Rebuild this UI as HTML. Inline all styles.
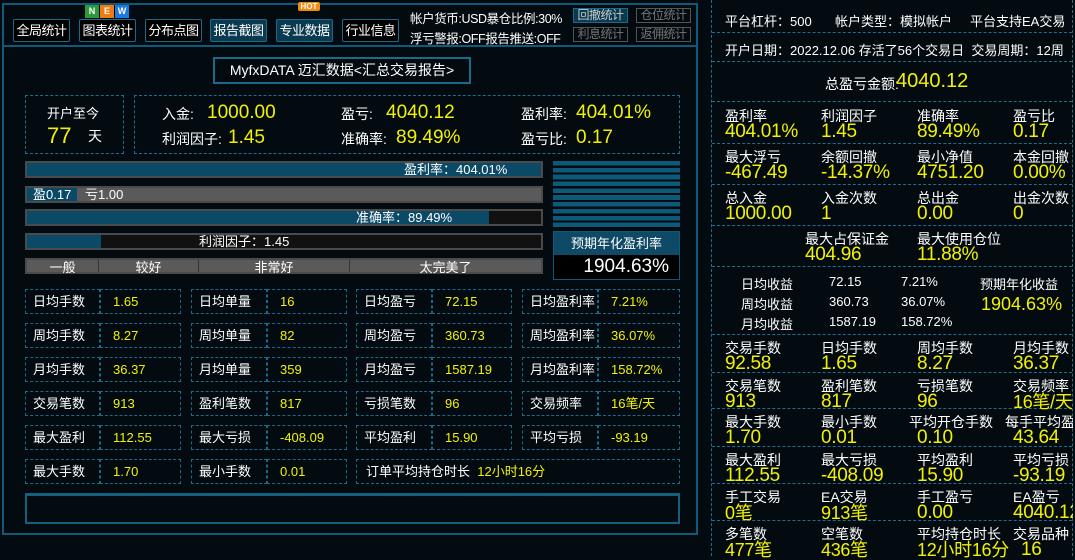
<!DOCTYPE html><html><head><meta charset="utf-8"><style>
*{margin:0;padding:0;box-sizing:border-box}
body{width:1075px;height:556px;background:#030b10;position:relative;overflow:hidden;font-family:"Liberation Sans","Noto Sans CJK SC",sans-serif;color:#fff;font-size:14px}
.a{position:absolute;white-space:nowrap}
.y{color:#f2f200}
.btn{position:absolute;top:19px;height:23px;width:57px;border:1px solid #1b6a8a;background:#000;font-size:13px;line-height:21px;text-align:center;border-radius:2px;white-space:nowrap;overflow:hidden;letter-spacing:-0.5px}
.btn.f{background:#0a3a50}
.sb{position:absolute;height:15px;width:55px;border:1px solid #555;font-size:12px;line-height:13px;text-align:center;color:#777;white-space:nowrap;overflow:hidden;letter-spacing:-0.5px}
.dash{position:absolute;border:1px dashed #1a7090}
.bar{position:absolute;left:25px;width:518px;height:17px;border:2px solid #4a4a4a;background:#111}
.bar i{position:absolute;left:0;top:0;bottom:0;background:#0a4a66}
.bar span{position:absolute;top:-1px;font-size:13px;line-height:15px;white-space:nowrap}
.cell{position:absolute;height:25px;border:1px dashed #1a6a8a;font-size:13px;line-height:23px;white-space:nowrap}
.rl{position:absolute;left:0;right:0;border-top:1px dashed #1a7090}
.l{font-size:14px;line-height:15px}
.v{font-size:19px;line-height:20px;color:#f2f200;letter-spacing:-0.3px}
.tt{font-size:12.5px;letter-spacing:-0.4px}
</style></head><body>
<div class="a" style="left:2px;top:3px;width:696px;height:532px;border:2px solid #0e5a7a"></div>
<div class="a" style="left:2px;top:45px;width:696px;border-top:2px solid #0e5a7a"></div>
<div class="btn" style="left:13px">全局统计</div>
<div class="btn" style="left:79px">图表统计</div>
<div class="btn" style="left:145px">分布点图</div>
<div class="btn f" style="left:210px">报告截图</div>
<div class="btn f" style="left:276px">专业数据</div>
<div class="btn" style="left:342px">行业信息</div>
<div class="a" style="left:85px;top:5px;width:14px;height:13px;background:#2a9a3a;font-size:9px;text-align:center;line-height:13px;font-weight:bold">N</div>
<div class="a" style="left:100px;top:5px;width:14px;height:13px;background:#f07a10;font-size:9px;text-align:center;line-height:13px;font-weight:bold">E</div>
<div class="a" style="left:115px;top:5px;width:14px;height:13px;background:#1a7ae0;font-size:9px;text-align:center;line-height:13px;font-weight:bold">W</div>
<div class="a" style="left:298px;top:2px;width:22px;height:9px;background:#f08a10;font-size:8px;text-align:center;line-height:9px;font-weight:bold;border-radius:2px">HOT</div>
<div class="a tt" style="left:410px;top:8px">帐户货币:USD暴仓比例:30%</div>
<div class="a tt" style="left:410px;top:28px">浮亏警报:OFF报告推送:OFF</div>
<div class="sb" style="left:573px;top:8px;border-color:#1b6a8a;background:#0a3a50;color:#ccc">回撤统计</div>
<div class="sb" style="left:636px;top:8px">仓位统计</div>
<div class="sb" style="left:573px;top:27px">利息统计</div>
<div class="sb" style="left:636px;top:27px">返佣统计</div>

<div class="a" style="left:213px;top:57px;width:258px;height:27px;border:2px solid #1a6a8a;font-size:14px;line-height:23px;text-align:center">MyfxDATA 迈汇数据&lt;汇总交易报告&gt;</div>
<div class="dash" style="left:25px;top:95px;width:99px;height:59px"></div>
<div class="a" style="left:47px;top:103px;font-size:13px">开户至今</div>
<div class="a y" style="left:47px;top:123px;font-size:22px">77</div>
<div class="a" style="left:88px;top:126px;font-size:14px">天</div>
<div class="dash" style="left:134px;top:95px;width:546px;height:59px"></div>
<div class="a" style="left:162px;top:104px">入金:</div><div class="a y" style="left:207px;top:102px;font-size:19px">1000.00</div>
<div class="a" style="left:341px;top:104px">盈亏:</div><div class="a y" style="left:386px;top:102px;font-size:19px">4040.12</div>
<div class="a" style="left:521px;top:104px">盈利率:</div><div class="a y" style="left:576px;top:102px;font-size:19px">404.01%</div>
<div class="a" style="left:162px;top:129px">利润因子:</div><div class="a y" style="left:228px;top:127px;font-size:19px">1.45</div>
<div class="a" style="left:341px;top:129px">准确率:</div><div class="a y" style="left:396px;top:127px;font-size:19px">89.49%</div>
<div class="a" style="left:521px;top:129px">盈亏比:</div><div class="a y" style="left:576px;top:127px;font-size:19px">0.17</div>

<div class="bar" style="top:161px"><i style="right:0"></i><span style="left:377px">盈利率：404.01%</span></div>
<div class="bar" style="top:186px;background:#5a5a5a"><i style="width:50px"></i><span style="left:6px">盈0.17</span><span style="left:58px">亏1.00</span></div>
<div class="bar" style="top:209px"><i style="width:462px"></i><span style="left:329px">准确率：89.49%</span></div>
<div class="bar" style="top:233px"><i style="width:74px"></i><span style="left:172px">利润因子：1.45</span></div>
<div class="bar" style="top:258px;height:16px;background:#5a5a5a;font-size:13px;line-height:12px">
<span style="left:0;width:72px;text-align:center;border-right:1px solid #333;height:12px;top:0">一般</span>
<span style="left:72px;width:100px;text-align:center;border-right:1px solid #333;height:12px;top:0">较好</span>
<span style="left:172px;width:151px;text-align:center;border-right:1px solid #333;height:12px;top:0">非常好</span>
<span style="left:323px;width:191px;text-align:center;top:0">太完美了</span></div>
<div class="a" style="left:553px;top:161px;width:127px;height:68px;background:repeating-linear-gradient(#0e5878 0 4.6px,transparent 4.6px 6.85px)"></div>
<div class="a" style="left:553px;top:231px;width:127px;height:49px;border:1px solid #0e5878;background:#000">
<div style="background:#0e4a66;height:23px;text-align:center;line-height:23px;font-size:13px">预期年化盈利率</div>
<div style="text-align:right;padding-right:10px;font-size:19px;line-height:24px">1904.63%</div></div>

<div id="cells"></div>
<div class="a" style="left:25px;top:493px;width:655px;height:31px;border:2px solid #14607e;border-top-width:3px"></div>

<div class="a" style="left:711px;top:0;width:362px;height:556px;border-left:1px dashed #1a7090;border-right:1px dashed #1a7090">
<div class="rl" style="top:32px"></div><div class="rl" style="top:61px"></div><div class="rl" style="top:101px"></div><div class="rl" style="top:143px"></div><div class="rl" style="top:184px"></div><div class="rl" style="top:225px"></div><div class="rl" style="top:266px"></div><div class="rl" style="top:334px"></div><div class="rl" style="top:372px"></div><div class="rl" style="top:408px"></div><div class="rl" style="top:446px"></div><div class="rl" style="top:483px"></div><div class="rl" style="top:520px"></div>
</div>
<div class="a" style="left:725px;top:11px;font-size:13px">平台杠杆：500</div>
<div class="a" style="left:835px;top:11px;font-size:13px">帐户类型：模拟帐户</div>
<div class="a" style="left:970px;top:11px;font-size:13px">平台支持EA交易</div>
<div class="a" style="left:725px;top:40px;font-size:13px">开户日期：2022.12.06 存活了56个交易日&nbsp; 交易周期：12周</div>
<div class="a" style="left:825px;top:74px;font-size:14px">总盈亏金额:</div><div class="a y" style="left:896px;top:70px;font-size:20px">4040.12</div>
<div class="a" style="left:741px;top:274px;font-size:13px">日均收益</div><div class="a" style="left:829px;top:274px;font-size:13px">72.15</div><div class="a" style="left:901px;top:274px;font-size:13px">7.21%</div>
<div class="a" style="left:741px;top:294px;font-size:13px">周均收益</div><div class="a" style="left:829px;top:294px;font-size:13px">360.73</div><div class="a" style="left:901px;top:294px;font-size:13px">36.07%</div>
<div class="a" style="left:741px;top:314px;font-size:13px">月均收益</div><div class="a" style="left:829px;top:314px;font-size:13px">1587.19</div><div class="a" style="left:901px;top:314px;font-size:13px">158.72%</div>
<div class="a" style="left:980px;top:274px;font-size:13px">预期年化收益</div><div class="a y" style="left:981px;top:294px;font-size:18px">1904.63%</div>
<div id="rc"></div>
<script>
var c=document.getElementById('cells'),h='';
var cols=[[25,100,181],[191,267,347],[356,432,512],[522,598,680]];
var rows=[289,323,357,391,425,459];
var d=[["日均手数","1.65","日均单量","16","日均盈亏","72.15","日均盈利率","7.21%"],
["周均手数","8.27","周均单量","82","周均盈亏","360.73","周均盈利率","36.07%"],
["月均手数","36.37","月均单量","359","月均盈亏","1587.19","月均盈利率","158.72%"],
["交易笔数","913","盈利笔数","817","亏损笔数","96","交易频率","16笔/天"],
["最大盈利","112.55","最大亏损","-408.09","平均盈利","15.90","平均亏损","-93.19"],
["最大手数","1.70","最小手数","0.01"]];
rows.forEach(function(t,r){for(var k=0;k<4;k++){var cc=cols[k];
if(r==5&&k==2){h+='<div class="cell" style="left:356px;top:'+t+'px;width:324px;padding-left:9px">订单平均持仓时长&nbsp; <span class="y">12小时16分</span></div>';break;}
h+='<div class="cell" style="left:'+cc[0]+'px;top:'+t+'px;width:'+(cc[1]-cc[0])+'px;padding-left:7px">'+d[r][k*2]+'</div>';
h+='<div class="cell y" style="left:'+cc[1]+'px;top:'+t+'px;width:'+(cc[2]-cc[1])+'px;padding-left:12px">'+d[r][k*2+1]+'</div>';}});
c.innerHTML=h;
var R=[[102,["盈利率","404.01%","利润因子","1.45","准确率","89.49%","盈亏比","0.17"]],
[143,["最大浮亏","-467.49","余额回撤","-14.37%","最小净值","4751.20","本金回撤","0.00%"]],
[184,["总入金","1000.00","入金次数","1","总出金","0.00","出金次数","0"]],
[334,["交易手数","92.58","日均手数","1.65","周均手数","8.27","月均手数","36.37"]],
[372,["交易笔数","913","盈利笔数","817","亏损笔数","96","交易频率","16笔/天"]],
[408,["最大手数","1.70","最小手数","0.01","平均开仓手数","0.10","每手平均盈亏","43.64"]],
[446,["最大盈利","112.55","最大亏损","-408.09","平均盈利","15.90","平均亏损","-93.19"]],
[483,["手工交易","0笔","EA交易","913笔","手工盈亏","0.00","EA盈亏","4040.12"]],
[520,["多笔数","477笔","空笔数","436笔","平均持仓时长","12小时16分","交易品种","16"]]];
var xs=[725,821,917,1013],g='';
R.forEach(function(o){for(var k=0;k<4;k++){var x=xs[k];var vx=x;if(o[0]==408&&k==2){x=909;vx=917;}if(o[0]==408&&k==3){x=1005;vx=1013;}
if(k==3&&o[0]==520)vx=x+8;
var fs=/[笔时]/.test(o[1][k*2+1])?'font-size:18px;':'';
g+='<div class="a l" style="left:'+x+'px;top:'+(o[0]+7)+'px">'+o[1][k*2]+'</div><div class="a v" style="'+fs+'left:'+vx+'px;top:'+(o[0]+20)+'px">'+o[1][k*2+1]+'</div>';}});
g+='<div class="a l" style="left:805px;top:232px">最大占保证金</div><div class="a v" style="left:805px;top:245px">404.96</div><div class="a l" style="left:917px;top:232px">最大使用仓位</div><div class="a v" style="left:917px;top:245px">11.88%</div>';
document.getElementById('rc').innerHTML=g;
</script>
<div class="a" style="left:1073px;top:0;width:2px;height:556px;background:#030b10"></div>
</body></html>
